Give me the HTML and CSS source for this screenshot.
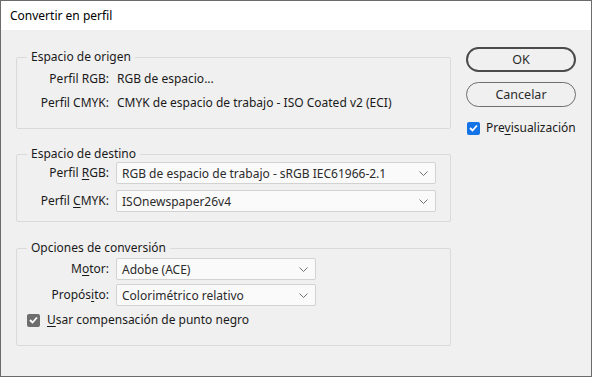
FILE: index.html
```html
<!DOCTYPE html>
<html lang="es">
  <head>
    <meta charset="UTF-8" />
    <title>Convertir en perfil</title>
    <link rel="stylesheet" href="styles.css">
  </head>
  <body>
    <div class="window">
      <div class="titlebar">Convertir en perfil</div>
      <div class="content">
        <div class="main">
          <!-- origen -->
          <fieldset class="group group-source">
            <legend>Espacio de origen</legend>
            <div class="form-grid info">
              <span class="label">Perfil RGB:</span>
              <span class="value">RGB de espacio...</span>
              <span class="label">Perfil CMYK:</span>
              <span class="value">CMYK de espacio de trabajo - ISO Coated v2 (ECI)</span>
            </div>
          </fieldset>

          <!-- destino -->
          <fieldset class="group group-dest">
            <legend>Espacio de destino</legend>
            <div class="form-grid">
              <span class="label">Perfil <u>R</u>GB:</span>
              <div class="select wide">
                <span>RGB de espacio de trabajo - sRGB IEC61966-2.1</span>
                <svg class="chevron" width="9" height="5" viewBox="0 0 9 5"><path d="M0.5 0.5 L4.5 4.5 L8.5 0.5" /></svg>
              </div>
              <span class="label">Perfil <u>C</u>MYK:</span>
              <div class="select wide">
                <span>ISOnewspaper26v4</span>
                <svg class="chevron" width="9" height="5" viewBox="0 0 9 5"><path d="M0.5 0.5 L4.5 4.5 L8.5 0.5" /></svg>
              </div>
            </div>
          </fieldset>

          <!-- opciones -->
          <fieldset class="group group-options">
            <legend>Opciones de conversión</legend>
            <div class="form-grid tight">
              <span class="label">M<u>o</u>tor:</span>
              <div class="select short">
                <span>Adobe (ACE)</span>
                <svg class="chevron" width="9" height="5" viewBox="0 0 9 5"><path d="M0.5 0.5 L4.5 4.5 L8.5 0.5" /></svg>
              </div>
              <span class="label">Propós<u>i</u>to:</span>
              <div class="select short">
                <span>Colorimétrico relativo</span>
                <svg class="chevron" width="9" height="5" viewBox="0 0 9 5"><path d="M0.5 0.5 L4.5 4.5 L8.5 0.5" /></svg>
              </div>
            </div>
            <label class="check black-point">
              <span class="box gray">
                <svg width="9" height="8" viewBox="0 0 9 8"><path d="M1 4 L3.5 6.5 L8 1.5" /></svg>
              </span>
              <span><u>U</u>sar compensación de punto negro</span>
            </label>
          </fieldset>
        </div>

        <div class="side">
          <button class="btn btn-primary">OK</button>
          <button class="btn">Cancelar</button>
          <label class="check preview">
            <span class="box blue">
              <svg width="9" height="8" viewBox="0 0 9 8"><path d="M1 4 L3.5 6.5 L8 1.5" /></svg>
            </span>
            <span>Pre<u>v</u>isualización</span>
          </label>
        </div>
      </div>
    </div>
  </body>
</html>
```

FILE: styles.css
```css
* {
  margin: 0;
  padding: 0;
  box-sizing: border-box;
}

body {
  font-family: "Noto Sans", "Open Sans", sans-serif;
  font-size: 12px;
  color: #1a1a1a;
  background-color: #f0f0f0;
}

.window {
  width: 592px;
  height: 377px;
  border: 1px solid #6b6b6b;
  background-color: #f0f0f0;
}

.titlebar {
  height: 29px;
  background-color: #ffffff;
  padding-left: 9px;
  line-height: 30px;
  font-size: 12px;
  color: #000000;
}

.content {
  display: flex;
  padding: 17px 0 0 15px;
}

.main {
  width: 435px;
  padding-top: 2px;
}

u {
  text-decoration: underline;
  text-underline-offset: 2px;
}

/* group boxes */
.group {
  border: 1px solid #dadada;
  border-radius: 2px;
  padding: 0 0 0 0;
  margin-bottom: 17px;
}

.group legend {
  margin-left: 10px;
  padding: 0 4px;
  line-height: 16px;
  color: #1a1a1a;
}

.group-source {
  height: 80px;
  padding-top: 6px;
}

.group-dest {
  height: 76px;
  margin-bottom: 18px;
}

.group-options {
  height: 106px;
  padding-top: 2px;
}

.form-grid {
  display: grid;
  grid-template-columns: 92px auto;
  column-gap: 7px;
  row-gap: 6px;
  align-items: center;
}

.form-grid.info {
  row-gap: 8px;
  column-gap: 8px;
}

.form-grid.tight {
  row-gap: 4px;
}

.label {
  text-align: right;
  line-height: 16px;
}

.value {
  line-height: 16px;
}

/* dropdowns */
.select {
  height: 22px;
  display: flex;
  align-items: center;
  justify-content: space-between;
  padding: 0 7px 0 5px;
  border: 1px solid #d2d2d2;
  border-radius: 2px;
  background-color: #fafafa;
  color: #2b2b2b;
}

.select.wide {
  width: 320px;
}

.select.short {
  width: 200px;
}

.chevron path {
  fill: none;
  stroke: #707070;
  stroke-width: 1;
}

/* checkboxes */
.check {
  display: flex;
  align-items: center;
  gap: 7px;
  line-height: 16px;
}

.box {
  width: 13px;
  height: 13px;
  border-radius: 2px;
  display: flex;
  align-items: center;
  justify-content: center;
}

.box svg path {
  fill: none;
  stroke: #ffffff;
  stroke-width: 1.8;
}

.box.gray {
  background-color: #6e6e6e;
}

.box.blue {
  background-color: #1473e6;
}

.black-point {
  margin: 6px 0 0 10px;
}

/* buttons */
.side {
  display: flex;
  flex-direction: column;
  margin-left: 15px;
}

.btn {
  width: 110px;
  height: 25px;
  border: 1px solid #6e6e6e;
  border-radius: 13px;
  background-color: #f0f0f0;
  font-family: inherit;
  font-size: 12.5px;
  color: #2b2b2b;
  margin-bottom: 10px;
}

.btn-primary {
  border: 2px solid #4b4b4b;
}

.preview {
  margin: 3px 0 0 1px;
  gap: 6px;
  font-size: 12px;
}
```
